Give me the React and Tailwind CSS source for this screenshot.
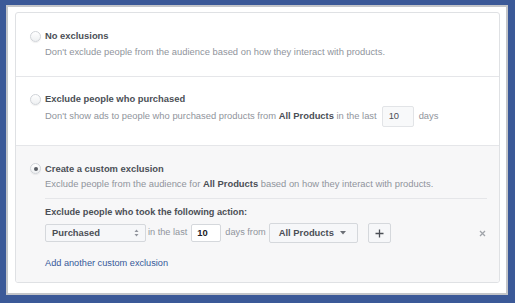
import React from "react";

function Radio({ checked }) {
  return (
    <div className="w-[11px] h-[11px] rounded-full border border-[#d0d3d8] bg-gradient-to-b from-white to-[#eef0f2] shadow-[0_1px_1px_rgba(0,0,0,0.06)] flex items-center justify-center shrink-0">
      {checked && <div className="w-[4px] h-[4px] rounded-full bg-[#5a5e65]" />}
    </div>
  );
}

export default function App() {
  const font = { fontFamily: '"Liberation Sans", Arial, Helvetica, sans-serif' };
  return (
    <div
      className="w-[515px] h-[303px] bg-[#3b5998] pl-[6px] pt-[5px] pr-[7px] pb-[8px]"
      style={font}
    >
      <div className="w-full h-full bg-white border-2 border-[#c3c5c9] pl-[7px] pt-[5px] pr-[6px] pb-[10px]">
        <div className="w-full h-full border border-[#dfe1e4] rounded-[3px] flex flex-col overflow-hidden">
          {/* Section 1 */}
          <div className="h-[64px] border-b border-[#e5e6e9] flex">
            <div className="w-[29px] pl-[14px] pt-[18px]">
              <Radio />
            </div>
            <div className="pt-[17px]">
              <div className="text-[9.4px] leading-[12px] font-bold text-[#4b4f56]">No exclusions</div>
              <div className="mt-[4px] text-[9.4px] leading-[12px] text-[#90949c]">
                Don't exclude people from the audience based on how they interact with products.
              </div>
            </div>
          </div>
          {/* Section 2 */}
          <div className="h-[69px] border-b border-[#e5e6e9] flex">
            <div className="w-[29px] pl-[14px] pt-[17px]">
              <Radio />
            </div>
            <div className="pt-[16px]">
              <div className="text-[9.4px] leading-[12px] font-bold text-[#4b4f56]">Exclude people who purchased</div>
              <div className="mt-[1px] flex items-center text-[9.4px] text-[#90949c]">
                <span>
                  Don't show ads to people who purchased products from{" "}
                  <span className="font-bold text-[#4b4f56]">All Products</span> in the last
                </span>
                <div className="ml-[5px] w-[32px] h-[21px] bg-[#f8f9fa] border border-[#e2e4e7] rounded-[2px] flex items-center pl-[6px] text-[#4b4f56]">
                  10
                </div>
                <span className="ml-[5px]">days</span>
              </div>
            </div>
          </div>
          {/* Section 3 */}
          <div className="flex-1 bg-[#f7f7f8] flex">
            <div className="w-[29px] pl-[14px] pt-[17px]">
              <Radio checked />
            </div>
            <div className="pt-[17px] flex-1 pr-[12px]">
              <div className="text-[9.4px] leading-[12px] font-bold text-[#4b4f56]">Create a custom exclusion</div>
              <div className="mt-[3px] text-[9.4px] leading-[12px] text-[#90949c]">
                Exclude people from the audience for{" "}
                <span className="font-bold text-[#4b4f56]">All Products</span> based on how they interact with products.
              </div>
              <div className="mt-[8px] border-t border-[#e5e6e9]" />
              <div className="mt-[7px] text-[9.2px] leading-[12px] font-bold text-[#4b4f56]">
                Exclude people who took the following action:
              </div>
              <div className="mt-[5px] flex items-center text-[9.2px] text-[#90949c]">
                <div className="w-[101px] h-[18px] bg-[#f6f7f9] border border-[#d5d8dc] rounded-[2px] flex items-center pl-[6px] pr-[6px] justify-between">
                  <span className="font-bold text-[#4b4f56] text-[9.4px]">Purchased</span>
                  <svg width="5" height="8" viewBox="0 0 5 8">
                    <path d="M2.5 0.5 L4.5 3 L0.5 3 Z" fill="#90949c" />
                    <path d="M2.5 7.5 L4.5 5 L0.5 5 Z" fill="#90949c" />
                  </svg>
                </div>
                <span className="ml-[2px]">in the last</span>
                <div className="ml-[4px] w-[30px] h-[18px] bg-white border border-[#d5d8dc] rounded-[2px] flex items-center pl-[5px] font-bold text-[9.4px] text-[#1d2129]">
                  10
                </div>
                <span className="ml-[4px]">days from</span>
                <div className="ml-[3px] w-[89px] h-[20px] bg-[#f6f7f9] border border-[#d5d8dc] rounded-[2px] flex items-center pl-[9px] gap-[6px]">
                  <span className="font-bold text-[#4b4f56] text-[9.4px]">All Products</span>
                  <svg width="6" height="4" viewBox="0 0 6 4">
                    <path d="M0 0 L6 0 L3 3.5 Z" fill="#6b6f76" />
                  </svg>
                </div>
                <div className="ml-[10px] w-[23px] h-[20px] bg-[#f6f7f9] border border-[#d5d8dc] rounded-[2px] flex items-center justify-center">
                  <svg width="9" height="9" viewBox="0 0 9 9">
                    <path d="M4.5 0.5 V8.5 M0.5 4.5 H8.5" stroke="#4b4f56" strokeWidth="1.3" />
                  </svg>
                </div>
                <div className="ml-auto mr-[1px]">
                  <svg width="7" height="7" viewBox="0 0 7 7">
                    <path d="M1 1 L6 6 M6 1 L1 6" stroke="#a0a4aa" strokeWidth="1.3" />
                  </svg>
                </div>
              </div>
              <div className="mt-[14px] text-[9.2px] leading-[12px] text-[#365899]">
                Add another custom exclusion
              </div>
            </div>
          </div>
        </div>
      </div>
    </div>
  );
}
